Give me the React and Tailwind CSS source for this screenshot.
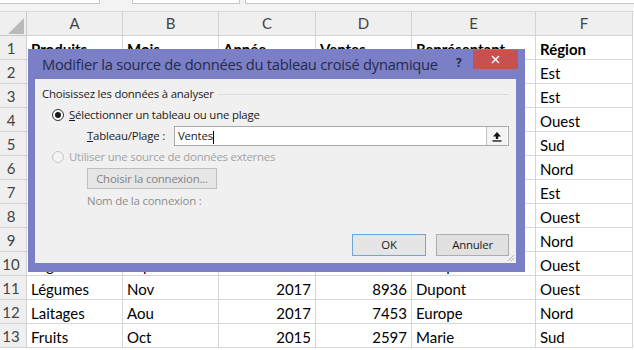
import React from 'react'

const cols = ['A', 'B', 'C', 'D', 'E', 'F']

// rows 2-9 sit fully behind the dialog, only column F shows
const rows = [
    ['Produits', 'Mois', 'Année', 'Ventes', 'Représentant', 'Région'],
    ['', '', '', '', '', 'Est'],
    ['', '', '', '', '', 'Est'],
    ['', '', '', '', '', 'Ouest'],
    ['', '', '', '', '', 'Sud'],
    ['', '', '', '', '', 'Nord'],
    ['', '', '', '', '', 'Est'],
    ['', '', '', '', '', 'Ouest'],
    ['', '', '', '', '', 'Nord'],
    ['Légumes', 'Sep', '2016', '7654', 'Europe', 'Ouest'],
    ['Légumes', 'Nov', '2017', '8936', 'Dupont', 'Ouest'],
    ['Laitages', 'Aou', '2017', '7453', 'Europe', 'Nord'],
    ['Fruits', 'Oct', '2015', '2597', 'Marie', 'Sud'],
]

function Radio({ checked, disabled }) {
    return (
        <span
            className={
                disabled
                    ? 'w-[12px] h-[12px] rounded-full border border-[#c6c6c6] bg-[#f3f3f3] flex items-center justify-center shrink-0'
                    : 'w-[12px] h-[12px] rounded-full border border-[#333333] bg-white flex items-center justify-center shrink-0'
            }
        >
            {checked && <span className="w-[6px] h-[6px] rounded-full bg-[#1a1a1a]" />}
        </span>
    )
}

function Sheet() {
    return (
        <div className="grid grid-cols-[27px_96px_96px_97px_96px_124px_97px] text-[15px] text-black">
            {/* column headers */}
            <div className="h-[24px] bg-[#efefef] border-r border-b border-[#c8c8c8] relative">
                <svg className="absolute left-[8px] top-[6px]" width="16" height="16" viewBox="0 0 16 16">
                    <polygon points="16,0 16,16 0,16" fill="#b9b9b9" />
                </svg>
            </div>
            {cols.map((c) => (
                <div
                    key={c}
                    className="h-[24px] bg-[#efefef] border-r border-b border-[#d2d2d2] flex items-center justify-center text-[#444]"
                >
                    {c}
                </div>
            ))}

            {/* rows */}
            {rows.map((r, i) => (
                <React.Fragment key={i}>
                    <div className="h-[24px] bg-[#efefef] border-r border-b border-[#d2d2d2] flex items-center justify-center pr-[4px] pt-[2px] text-[#444]">
                        {i + 1}
                    </div>
                    {r.map((v, j) => (
                        <div
                            key={j}
                            className={
                                'h-[24px] border-r border-b border-[#d6d6d6] flex items-center pt-[3px] whitespace-nowrap overflow-hidden ' +
                                (j === 2 || j === 3 ? (i === 0 ? 'px-[4px] ' : 'justify-end pr-[4px] ') : 'px-[4px] ') +
                                (i === 0 ? 'font-bold' : '')
                            }
                        >
                            {v}
                        </div>
                    ))}
                </React.Fragment>
            ))}
        </div>
    )
}

function Dialog() {
    return (
        <div className="absolute left-[28px] top-[49px] w-[497px] h-[223px] bg-[#7b7fc6] flex flex-col font-['Open_Sans',sans-serif]">
            {/* title bar */}
            <div className="h-[30px] flex items-center pl-[14px] relative">
                <span className="text-[14.7px] tracking-[-0.25px] text-[#262a4d]">
                    Modifier la source de données du tableau croisé dynamique
                </span>
                <span className="absolute left-[428px] top-[5px] text-[12px] font-bold text-[#262a4d]">?</span>
                <div className="absolute left-[445px] top-[1px] w-[45px] h-[19px] bg-[#c75050] flex items-center justify-center">
                    <svg width="9" height="9" viewBox="0 0 9 9">
                        <path d="M1 1 L8 8 M8 1 L1 8" stroke="#fff" strokeWidth="1.4" />
                    </svg>
                </div>
            </div>

            {/* body */}
            <div className="flex-1 ml-[7px] mr-[9px] mb-[9px] bg-[#f0f0f0] relative flex flex-col pl-[7px] pr-[7px] pt-[7px] text-[11.4px] tracking-[-0.2px] text-[#1b1b1b]">
                <div className="h-[16px] flex items-center gap-[4px]">
                    <span>Choisissez les données à analyser</span>
                    <span className="flex-1 h-px bg-[#dcdcdc]" />
                </div>

                <div className="h-[16px] mt-[5px] pl-[10px] flex items-center gap-[5px]">
                    <Radio checked />
                    <span>
                        <span className="underline">S</span>électionner un tableau ou une plage
                    </span>
                </div>

                <div className="h-[20px] mt-[3px] pl-[45px] flex items-center">
                    <span className="w-[87px]">
                        <span className="underline">T</span>ableau/Plage :
                    </span>
                    <div className="flex-1 h-[20px] border border-[#a9a9a9] bg-white flex items-center">
                        <span className="pl-[3px] flex-1">
                            Ventes<span className="inline-block w-px h-[13px] bg-black align-middle" />
                        </span>
                        <div className="w-[21px] h-[18px] border-l border-[#c2c2c2] bg-[#f4f4f4] flex items-center justify-center mr-[1px]">
                            <svg width="10" height="11" viewBox="0 0 10 11">
                                <path d="M5 1 L9 5.5 L6.2 5.5 L6.2 8 L3.8 8 L3.8 5.5 L1 5.5 Z" fill="#111" />
                                <rect x="0.5" y="9.3" width="9" height="1.3" fill="#111" />
                            </svg>
                        </div>
                    </div>
                </div>

                <div className="h-[16px] mt-[3px] pl-[10px] flex items-center gap-[5px] text-[#a3a3a3]">
                    <Radio disabled />
                    <span>Utiliser une source de données externes</span>
                </div>

                <div className="mt-[3px] pl-[45px] flex">
                    <div className="w-[130px] h-[21px] border border-[#bfbfbf] bg-[#e6e6e6] flex items-center justify-center text-[#838383]">
                        Choisir la connexion...
                    </div>
                </div>

                <div className="h-[16px] mt-[4px] pl-[45px] flex items-center text-[#8d8d8d]">
                    Nom de la connexion :
                </div>

                <div className="mt-[25px] flex justify-end gap-[10px]">
                    <div className="w-[74px] h-[22px] border border-[#6ea5dc] bg-[#e5e5e5] flex items-center justify-center">
                        OK
                    </div>
                    <div className="w-[73px] h-[22px] border border-[#adadad] bg-[#e1e1e1] flex items-center justify-center">
                        Annuler
                    </div>
                </div>

                {/* resize grip */}
                <svg className="absolute right-[1px] bottom-[1px]" width="8" height="8" viewBox="0 0 8 8">
                    <path d="M7 1 L1 7 M7 4 L4 7" stroke="#b5b5b5" strokeWidth="1" />
                </svg>
            </div>
        </div>
    )
}

export default function App() {
    return (
        <div className="relative w-[634px] h-[350px] overflow-hidden bg-white font-['Lato',sans-serif]">
            {/* formula bar remnants */}
            <div className="h-[12px] bg-[#f3f3f3] border-b border-[#d9d9d9] relative">
                <div className="absolute left-0 top-0 w-[100px] h-[4px] bg-white border-b border-r border-[#c6c6c6]" />
                <div className="absolute left-[132px] top-0 w-[108px] h-[4px] bg-white border-b border-x border-[#c6c6c6]" />
                <div className="absolute left-[245px] top-0 w-[389px] h-[4px] bg-white border-b border-l border-[#c6c6c6]" />
            </div>
            <Sheet />
            <Dialog />
        </div>
    )
}
